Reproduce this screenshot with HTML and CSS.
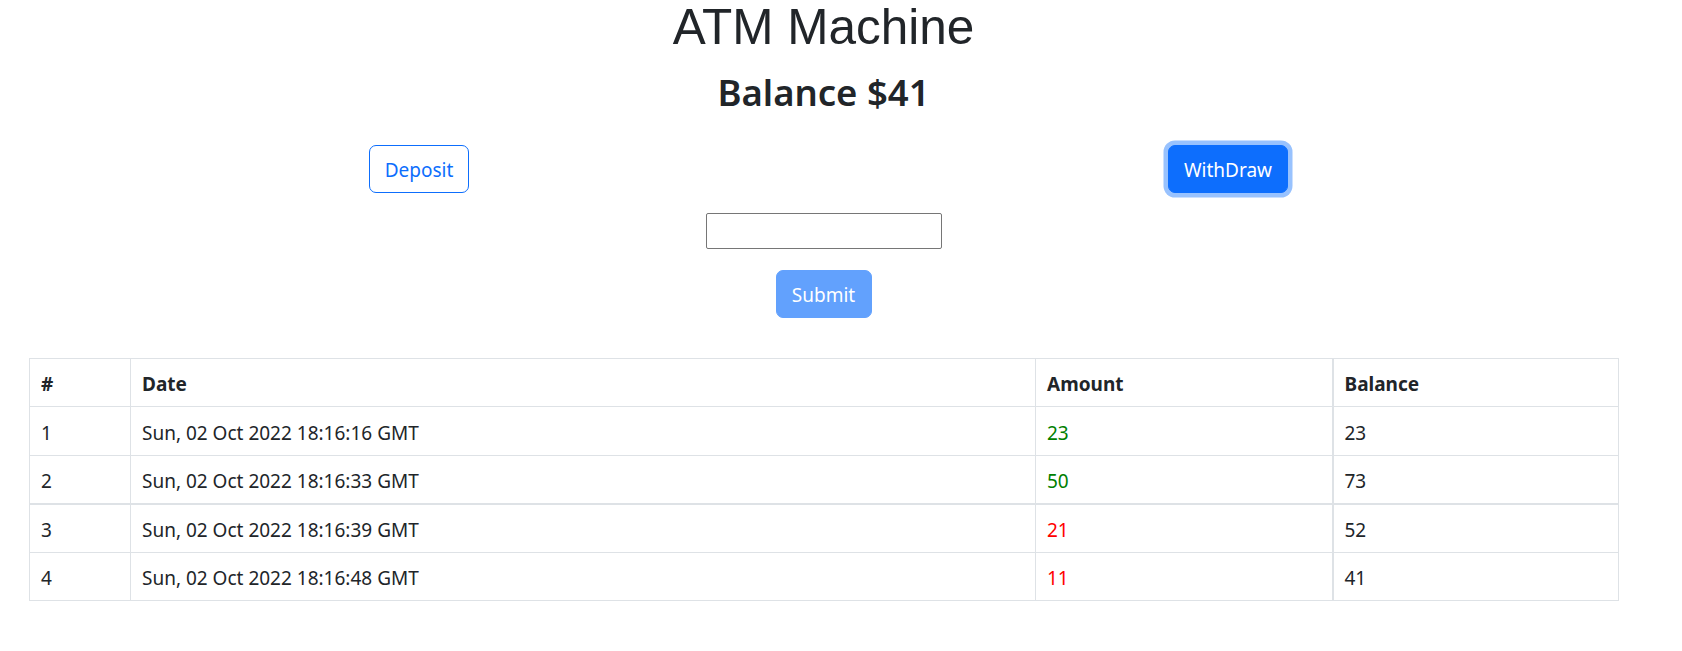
FILE: index.html
```html
<!DOCTYPE html>
<html lang="en">
<head>
<meta charset="utf-8">
<title>ATM Machine</title>
<link rel="stylesheet" href="styles.css">
</head>
<body>
<div class="page">
  <h1 class="title">ATM Machine</h1>
  <h2 class="balance">Balance $41</h2>
  <div class="actions">
    <div class="action-col"><button class="btn btn-outline btn-deposit" type="button">Deposit</button></div>
    <div class="action-col"><button class="btn btn-primary btn-withdraw" type="button">WithDraw</button></div>
  </div>
  <form class="amount-form">
    <input class="amount-input" type="number">
    <button class="btn btn-submit" type="button" disabled>Submit</button>
  </form>
  <table class="history">
    <colgroup>
      <col class="c-num">
      <col class="c-date">
      <col class="c-amount">
      <col class="c-balance">
    </colgroup>
    <thead>
      <tr><th>#</th><th>Date</th><th>Amount</th><th class="bal">Balance</th></tr>
    </thead>
    <tbody>
      <tr><td>1</td><td>Sun, 02 Oct 2022 18:16:16 GMT</td><td class="plus">23</td><td class="bal">23</td></tr>
      <tr class="thick"><td>2</td><td>Sun, 02 Oct 2022 18:16:33 GMT</td><td class="plus">50</td><td class="bal">73</td></tr>
      <tr><td>3</td><td>Sun, 02 Oct 2022 18:16:39 GMT</td><td class="minus">21</td><td class="bal">52</td></tr>
      <tr><td>4</td><td>Sun, 02 Oct 2022 18:16:48 GMT</td><td class="minus">11</td><td class="bal">41</td></tr>
    </tbody>
  </table>
</div>
</body>
</html>
```

FILE: styles.css
```css
* { box-sizing: border-box; }

body {
  margin: 0;
  background: #fff;
  color: #212529;
  font-family: "Noto Sans", "Open Sans", sans-serif;
  font-size: 19px;
}

.page {
  width: 1589px;
  margin-left: 29px;
}

.title {
  margin: 0;
  font-family: "Liberation Sans", Arial, sans-serif;
  font-weight: 400;
  font-size: 49.5px;
  line-height: 53px;
  text-align: center;
}

.balance {
  margin: 18px 0 0;
  font-size: 36.5px;
  font-weight: 600;
  line-height: 43px;
  text-align: center;
}

.actions {
  display: flex;
  margin: 31px -14.5px 0;
}

.action-col {
  flex: 1;
  display: flex;
  justify-content: center;
}

.btn {
  font-family: inherit;
  font-size: 19px;
  line-height: 28px;
  height: 48px;
  padding: 2px 0 0;
  border-radius: 7px;
  border: 1px solid transparent;
  cursor: pointer;
  text-align: center;
}

.btn-outline {
  background: #fff;
  color: #0d6efd;
  border-color: #0d6efd;
}

.btn-deposit { width: 100px; }

.btn-primary {
  background: #0d6efd;
  color: #fff;
  border-color: #0d6efd;
  box-shadow: 0 0 0 4.5px #98c2fe;
}

.btn-withdraw { width: 120px; }

.amount-form {
  display: flex;
  flex-direction: column;
  align-items: center;
  margin-top: 20px;
}

.amount-input {
  width: 236px;
  height: 36px;
  border: 1px solid #767676;
  border-radius: 2px;
  padding: 1px 2px;
  font-size: 16px;
}

.btn-submit {
  margin-top: 21px;
  width: 96px;
  background: #62a1fd;
  color: #fff;
  border-color: #62a1fd;
  cursor: default;
}

.history {
  margin-top: 40px;
  width: 1589px;
  border-collapse: collapse;
  table-layout: fixed;
}

.c-num { width: 101px; }
.c-date { width: 905px; }
.c-amount { width: 297px; }
.c-balance { width: 286px; }

.history th,
.history td {
  border: 1px solid #dee2e6;
  height: 48.4px;
  padding: 3px 11px 0;
  text-align: left;
  vertical-align: middle;
  font-size: 19px;
  line-height: 28px;
}

.history th { font-weight: 700; }

.history .bal { border-left: 2px solid #dee2e6; }
.history tr.thick td { border-bottom: 2px solid #dee2e6; }

.plus { color: #008000; }
.minus { color: #ff0000; }
```
